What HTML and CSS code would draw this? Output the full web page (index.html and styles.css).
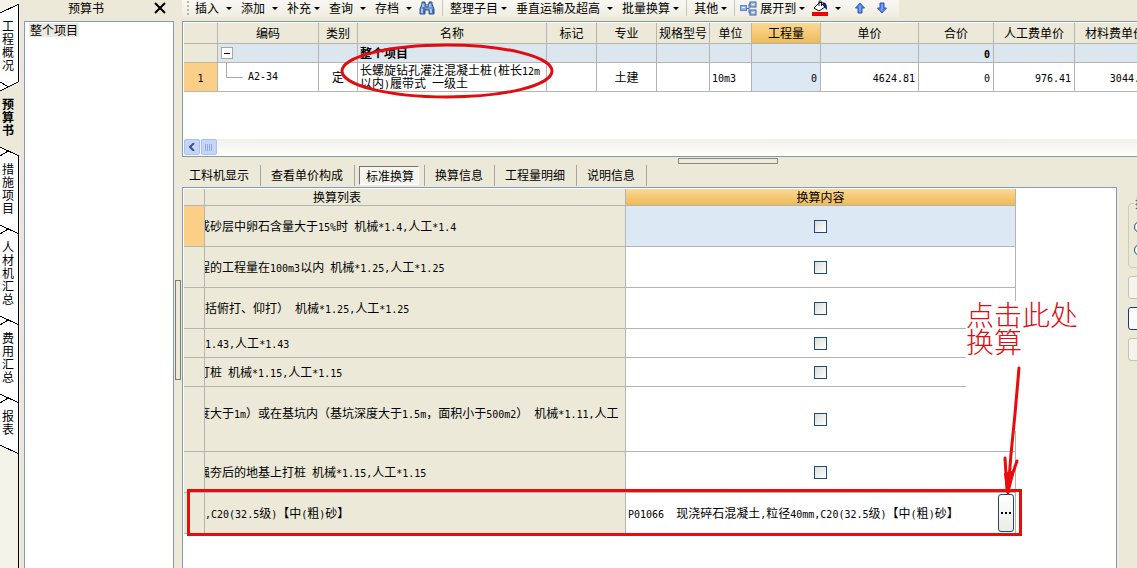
FILE: index.html
```html
<!DOCTYPE html>
<html lang="zh-CN">
<head>
<meta charset="utf-8">
<title>预算书</title>
<link rel="stylesheet" href="styles.css">
</head>
<body>
<div class="app">
  <nav class="side-tabs">
    <svg class="side-lines" width="20" height="568" viewBox="0 0 20 568" fill="none" stroke="#000" shape-rendering="crispEdges">
      <path d="M0 12.500L18 4V82L0 91Z" fill="#fff" stroke="none"/>
      <path d="M0 91L18 82H20V156L0 147Z" fill="#ece9d8" stroke="none"/>
      <path d="M0 147L18 155V453L0 445Z" fill="#fff" stroke="none"/>
      <path d="M0 13L18 4.500M0 82L8 86.500M0 91L18 82M0 147L18 155.500M8 151L0 156M0 225L18 233.500M8 229L0 234M0 316L18 324.500M8 320L0 325M0 394L18 402.500M8 398L0 403M0 445L18 453.500"/>
      <path d="M18.500 4V82M18.500 155V568"/>
    </svg>
    <button class="side-tab">工程概况</button>
    <button class="side-tab current">预算书</button>
    <button class="side-tab">措施项目</button>
    <button class="side-tab">人材机汇总</button>
    <button class="side-tab">费用汇总</button>
    <button class="side-tab">报表</button>
  </nav>

  <aside class="tree-pane">
    <header class="tree-head">
      <h1 class="tree-title">预算书</h1>
      <button class="close" aria-label="关闭"><svg width="12" height="12" viewBox="0 0 12 12" stroke="#000" stroke-width="2"><path d="M1 1L11 11M11 1L1 11"/></svg></button>
    </header>
    <div class="tree"><a class="tree-item" href="#">整个项目</a></div>
  </aside>
  <div class="v-split"><span class="v-grip"></span></div>

  <main class="main">
    <div class="toolbar-row">
      <div class="toolbar">
        <span class="grip"></span>
        <button class="tool">插入<i class="caret"></i></button>
        <button class="tool">添加<i class="caret"></i></button>
        <button class="tool tight">补充<i class="caret"></i></button>
        <button class="tool">查询<i class="caret"></i></button>
        <button class="tool">存档<i class="caret"></i></button>
        <button class="icon-tool" aria-label="查找">
          <svg width="16" height="15" viewBox="0 0 16 15"><path d="M3 1h3v2h1v3h2V3h1V1h3v2l2 5v5h-5V9H6v4H1V8l2-5z" fill="#6f9ad6" stroke="#2c4c8c"/><path d="M3 8v4M12 8v4M4 3v3M11 3v3" stroke="#e4f0ff" stroke-width="1"/><path d="M5 6v6M14 8v4" stroke="#244a90"/></svg>
        </button>
        <span class="sep"></span>
        <button class="tool tight">整理子目<i class="caret"></i></button>
        <button class="tool">垂直运输及超高<i class="caret"></i></button>
        <button class="tool tight">批量换算<i class="caret"></i></button>
        <span class="sep"></span>
        <button class="tool tight">其他<i class="caret"></i></button>
        <span class="sep"></span>
        <button class="tool tight">
          <svg class="expand" width="17" height="15" viewBox="0 0 17 15"><path d="M5 7.500H9M9 3V12M9 3h3M9 12h3" stroke="#4a6cae" fill="none"/><rect x=".5" y="4.500" width="6" height="5" fill="#8fb6f0" stroke="#5b84c8"/><rect x="10" y="1" width="6" height="5" fill="#a8c8f4" stroke="#3d63aa"/><rect x="10" y="9" width="6" height="5" fill="#a8c8f4" stroke="#3d63aa"/><path d="M2 6.500h3M12 3.500h2M12 11.500h2" stroke="#fff"/></svg>展开到<i class="caret"></i></button>
        <button class="icon-tool fill-tool" aria-label="填充颜色">
          <svg width="16" height="16" viewBox="0 0 16 16"><path d="M2 8L8 2L13 7L7 11z" fill="#fff" stroke="#111"/><path d="M7 6V1.500Q8.500-.5 9.500 2V6" fill="none" stroke="#111"/><path d="M10 2Q15 2 15 8V10L12 7z" fill="#15207c"/><rect y="12" width="16" height="4" fill="#f00000"/></svg>
          <i class="caret"></i>
        </button>
        <button class="icon-tool" aria-label="上移"><svg width="10" height="12" viewBox="0 0 10 12"><path d="M5 1L9.500 6H7V11H3V6H.5z" fill="#4f82ea" stroke="#2c55b8"/><path d="M5 3V10" stroke="#9cc0ff"/></svg></button>
        <button class="icon-tool" aria-label="下移"><svg width="10" height="12" viewBox="0 0 10 12"><path d="M5 11L9.500 6H7V1H3V6H.5z" fill="#4f82ea" stroke="#2c55b8"/><path d="M5 2V9" stroke="#9cc0ff"/></svg></button>
      </div>
    </div>

    <section class="items-panel">
      <div class="items-scroll">
        <table class="grid items">
          <colgroup><col class="w34"><col class="w101"><col class="w39"><col class="w189"><col class="w50"><col class="w60"><col class="w53"><col class="w42"><col class="w69"><col class="w98"><col class="w75"><col class="w81"><col class="w81"></colgroup>
          <thead>
            <tr><th></th><th>编码</th><th>类别</th><th>名称</th><th>标记</th><th>专业</th><th>规格型号</th><th>单位</th><th class="hot">工程量</th><th>单价</th><th>合价</th><th>人工费单价</th><th>材料费单价</th></tr>
          </thead>
          <tbody>
            <tr class="group"><td class="rowhead"></td><td><button class="toggle" aria-label="折叠"></button></td><td></td><td class="strong">整个项目</td><td></td><td></td><td></td><td></td><td></td><td></td><td class="num strong"><b class="n">0</b></td><td></td><td></td></tr>
            <tr class="item"><td class="rowhead hot-row"><span class="n">1</span></td>
              <td><div class="code"><svg class="branch" width="17" height="29" viewBox="0 0 17 29" fill="none" stroke="#a8a8a8"><path d="M.5 0V14.500H17"/></svg><span class="n">A2-34</span></div></td>
              <td class="mid">定</td><td class="name">长螺旋钻孔灌注混凝土桩<span class="n">(</span>桩长<span class="n">12m</span><br>以内<span class="n">)</span>履带式<span class="n"> </span>一级土</td><td></td><td class="mid">土建</td><td></td><td><span class="n">10m3</span></td><td class="num chosen"><span class="n">0</span></td><td class="num"><span class="n">4624.81</span></td><td class="num"><span class="n">0</span></td><td class="num"><span class="n">976.41</span></td><td class="num"><span class="n">3044.18</span></td></tr>
          </tbody>
        </table>
      </div>
      <div class="hbar">
        <button class="hbtn" aria-label="向左"><svg width="8" height="8" viewBox="0 0 8 8" fill="none" stroke="#3c5080" stroke-width="2"><path d="M6 0L2 4L6 8"/></svg></button>
        <button class="hbtn" aria-label="滚动"><svg width="8" height="7" viewBox="0 0 8 7" stroke="#8fa9ec"><path d="M.5 0V7M2.500 0V7M4.500 0V7M6.500 0V7"/></svg></button>
      </div>
      <svg class="mark ring" width="216" height="60" viewBox="0 0 216 60" fill="none" stroke="#e00c10" stroke-width="3"><ellipse cx="108" cy="29" rx="105" ry="26"/></svg>
    </section>

    <div class="h-split"><span class="h-grip"></span></div>
    <nav class="tabs">
      <button class="tab">工料机显示</button>
      <button class="tab">查看单价构成</button>
      <button class="tab pressed"><span>标准换算</span></button>
      <button class="tab">换算信息</button>
      <button class="tab">工程量明细</button>
      <button class="tab">说明信息</button>
    </nav>

    <div class="detail">
      <section class="convert-panel">
        <table class="grid convert">
          <colgroup><col class="w21"><col class="w421"><col class="w390"></colgroup>
          <thead><tr><th></th><th class="list-head">换算列表</th><th class="hot">换算内容</th></tr></thead>
          <tbody>
            <tr class="r41"><td class="hot-row"></td><td><div class="line cut">或砂层中卵石含量大于<span class="n">15%</span>时<span class="n"> </span>机械<span class="n">*1.4,</span>人工<span class="n">*1.4</span></div></td><td class="pick chosen"><input type="checkbox" aria-label="换算一"></td></tr>
            <tr class="r41"><td></td><td><div class="line cut">程的工程量在<span class="n">100m3</span>以内<span class="n"> </span>机械<span class="n">*1.25,</span>人工<span class="n">*1.25</span></div></td><td class="pick"><input type="checkbox" aria-label="换算二"></td></tr>
            <tr class="r41"><td></td><td><div class="line">括俯打、仰打）<span class="n"> </span>机械<span class="n">*1.25,</span>人工<span class="n">*1.25</span></div></td><td class="pick"><input type="checkbox" aria-label="换算三"></td></tr>
            <tr class="r29"><td></td><td><div class="line"><span class="n">1.43,</span>人工<span class="n">*1.43</span></div></td><td class="pick"><input type="checkbox" aria-label="换算四"></td></tr>
            <tr class="r29"><td></td><td><div class="line cut">打桩<span class="n"> </span>机械<span class="n">*1.15,</span>人工<span class="n">*1.15</span></div></td><td class="pick"><input type="checkbox" aria-label="换算五"></td></tr>
            <tr class="r65"><td></td><td><div class="line cut two">度大于<span class="n">1m</span>）或在基坑内（基坑深度大于<span class="n">1.5m</span>，面积小于<span class="n">500m2</span>）<span class="n"> </span>机械<span class="n">*1.11,</span>人工</div></td><td class="pick"><input type="checkbox" aria-label="换算六"></td></tr>
            <tr class="r41"><td></td><td><div class="line cut">强夯后的地基上打桩<span class="n"> </span>机械<span class="n">*1.15,</span>人工<span class="n">*1.15</span></div></td><td class="pick"><input type="checkbox" aria-label="换算七"></td></tr>
            <tr class="r41"><td></td><td><div class="line"><span class="n">,C20(32.5</span>级<span class="n">)</span>【中<span class="n">(</span>粗<span class="n">)</span>砂】</div></td>
              <td class="pick"><div class="choice"><span><span class="n">P01066  </span>现浇碎石混凝土<span class="n">,</span>粒径<span class="n">40mm,C20(32.5</span>级<span class="n">)</span>【中<span class="n">(</span>粗<span class="n">)</span>砂】</span><button class="more" aria-label="选择"><svg width="11" height="2" viewBox="0 0 11 2" fill="#000"><path d="M0 0h2v2H0zM4 0h2v2H4zM8 0h2v2H8z"/></svg></button></div></td></tr>
          </tbody>
        </table>
        <p class="note">点击此处<br>换算</p>
        <div class="mark box"></div>
        <svg class="mark arrow" width="24" height="134" viewBox="0 0 24 134" fill="none" stroke="#e80c0c" stroke-width="3" stroke-linecap="round" stroke-linejoin="round"><path d="M18 4L14 50L10 90L7 128M4 94L6 126L16 97"/><path d="M4 110L10 108L12 110L7 130z" fill="#e80c0c" stroke-width="2"/></svg>
      </section>
      <aside class="options">
        <fieldset class="modes">
          <legend>换算</legend>
          <input type="radio" name="mode" aria-label="方式一">
          <input type="radio" name="mode" aria-label="方式二">
        </fieldset>
        <button class="opt" aria-label="上移"></button>
        <button class="opt focus" aria-label="下移"></button>
        <button class="opt" aria-label="取消"></button>
      </aside>
    </div>
  </main>
</div>
</body>
</html>
```
FILE: styles.css
```css
* { box-sizing: border-box; }

body {
  margin: 0;
  background: #ece9d8;
  color: #000;
  font: 12px/14px "Noto Sans CJK SC", sans-serif;
}

button {
  margin: 0;
  padding: 0;
  border: 0;
  background: none;
  color: inherit;
  font: inherit;
  white-space: nowrap;
}

svg { display: block; flex: none; }

/* Latin text at half the width of a Chinese character */
.n {
  font-family: "DejaVu Sans Mono", monospace;
  font-size: 10px;
  line-height: 10px;
  white-space: pre;
}

.app {
  display: flex;
  height: 100vh;
  overflow: hidden;
}

/* vertical tabs */
.side-tabs {
  position: relative;
  flex: none;
  display: flex;
  flex-direction: column;
  align-items: flex-start;
  gap: 26px;
  width: 20px;
  padding: 19px 0 0 2px;
  background: #f4f3ea;
}
.side-lines { position: absolute; left: 0; top: 0; }
.side-tab {
  position: relative;
  width: 12px;
  line-height: 13px;
  white-space: normal;
  word-break: break-all;
}
.side-tab.current { font-weight: bold; }

/* project tree */
.tree-pane {
  flex: none;
  display: flex;
  flex-direction: column;
  width: 154px;
  padding-left: 4px;
  background: #ece6da;
}
.tree-head {
  display: flex;
  align-items: center;
  height: 21px;
  padding: 0 8px 6px 0;
  background: #ece9d8;
}
.tree-title {
  flex: 1;
  margin: 0;
  padding-right: 6px;
  font: inherit;
  text-align: center;
}
.tree {
  flex: 1;
  padding: 1px 4px;
  border: 1px solid #7f9db9;
  border-bottom: 0;
  background: #fff;
}
.tree-item {
  display: inline-block;
  padding: 0 1px;
  background: #ece9e0;
  color: inherit;
  text-decoration: none;
}

.v-split {
  flex: none;
  display: flex;
  align-items: center;
  width: 8px;
  padding: 92px 1px 0;
}
.v-grip {
  width: 6px;
  height: 100px;
  border: 1px solid #7c7c78;
  background: #ece9d8;
}

.main {
  flex: 1;
  display: flex;
  flex-direction: column;
  min-width: 0;
}

/* toolbar */
.toolbar-row { flex: none; display: flex; height: 21px; }
.toolbar {
  display: flex;
  align-items: center;
  height: 17px;
  padding: 0 0 1px 5px;
  background: linear-gradient(#f8f7f2, #f0eee2);
}
.grip {
  width: 2px;
  height: 14px;
  margin-right: 6px;
  background: repeating-linear-gradient(#b8b5a4 0 2px, transparent 2px 4px);
}
.tool { display: flex; align-items: center; gap: 7px; margin-right: 9px; }
.tool.tight { gap: 3px; }
.caret {
  border: 3px solid transparent;
  border-top-color: #000;
  border-bottom: 0;
}
.icon-tool { display: flex; align-items: center; gap: 7px; margin-right: 12px; }
.icon-tool:has(+ .sep) { margin-right: 7px; }
.tool + .icon-tool { margin-left: -2px; }
.fill-tool { margin-right: 14px; }
.sep {
  width: 1px;
  height: 16px;
  margin-right: 7px;
  background: #c9c6b6;
}
.tool:has(+ .sep) { margin-right: 7px; }
.sep:has(+ .tool .expand) { margin-right: 5px; }

/* shared grid look */
.grid {
  table-layout: fixed;
  border-collapse: separate;
  border-spacing: 0;
}
.grid th, .grid td {
  padding: 0;
  border-right: 1px solid #b4b4b0;
  border-bottom: 1px solid #b4b4b0;
  font-weight: normal;
  overflow: hidden;
  white-space: nowrap;
}
.grid th { background: #ece9d8; text-align: center; }
.grid th.hot { background: linear-gradient(#fbd894, #edbb58); }
.grid .hot-row { background: #fccf88; }
.grid .chosen { background: #dde8f5; }
.w34 { width: 34px; } .w101 { width: 101px; } .w39 { width: 39px; }
.w189 { width: 189px; } .w50 { width: 50px; } .w60 { width: 60px; }
.w53 { width: 53px; } .w42 { width: 42px; } .w69 { width: 69px; }
.w98 { width: 98px; } .w75 { width: 75px; } .w81 { width: 81px; }
.w21 { width: 21px; } .w421 { width: 421px; } .w390 { width: 390px; }

/* budget items */
.items-panel {
  position: relative;
  flex: none;
  display: flex;
  flex-direction: column;
  height: 136px;
  padding: 1px 0 0 1px;
  border: 1px solid #7f9d9f;
  border-right: 0;
  background: #fff;
}
.items-scroll { flex: 1; overflow: hidden; }
.items { width: 972px; }
.items th { height: 21px; }
.items td { padding: 0 2px; }
.items .rowhead { text-align: center; }
.group td { height: 19px; background: #dce6ef; }
.group .rowhead { background: #ece9d8; }
.item td { height: 29px; }
.items .num { padding-right: 3px; text-align: right; }
.items .mid { text-align: center; }
.items .strong { font-weight: bold; }
.items .name { line-height: 12px; }
.toggle {
  display: flex;
  align-items: center;
  justify-content: center;
  width: 12px;
  height: 12px;
  margin-left: 1px;
  border: 1px solid #a0a8a8;
  background: #fff;
}
.toggle::before { content: ""; width: 6px; height: 1px; background: #000; }
.code { display: flex; align-items: center; gap: 5px; height: 28px; padding-left: 6px; }
.hbar {
  flex: none;
  display: flex;
  gap: 1px;
  height: 17px;
  background: linear-gradient(#f1f0ea, #fefefc);
}
.hbtn {
  display: flex;
  align-items: center;
  justify-content: center;
  width: 16px;
  height: 16px;
  border: 1px solid #aac0f0;
  border-radius: 2px;
  background: #c5d4fb;
}

.h-split { flex: none; display: flex; justify-content: center; height: 7px; padding: 1px 0 0 136px; }
.h-grip { width: 100px; height: 6px; border: 1px solid #848c8c; }

/* detail tabs */
.tabs { flex: none; display: flex; height: 23px; }
.tab {
  margin: 1px 0;
  padding: 0 11px 2px 10px;
  border-right: 1px solid #a8a698;
}
.tab:first-child { padding-left: 7px; }
.tab.pressed { padding: 0 5px 0 4px; }
.tab.pressed span {
  display: block;
  padding: 2px 4px 1px 6px;
  border: 1px solid;
  border-color: #77756a #fff #fff #77756a;
  background: #f6f5ee;
}

/* conversions */
.detail { flex: 1; display: flex; min-height: 0; }
.convert-panel {
  position: relative;
  flex: 1;
  min-width: 0;
  padding: 1px 0 0 1px;
  border: 1px solid #7f9db9;
  border-bottom: 0;
  background: #fff;
}
.convert { width: 832px; }
.convert th { height: 17px; line-height: 14px; }
.convert .list-head { padding-right: 156px; }
.convert td { background: #ece9d8; }
.convert .pick { background: #fff; text-align: center; }
.convert .chosen { background: #dde8f5; }
.r41 td { height: 41px; }
.r29 td { height: 29px; }
.r65 td { height: 65px; }
.line.cut { margin-left: -7px; }
.line.two { padding-bottom: 12px; }
.pick input {
  appearance: none;
  display: block;
  width: 13px;
  height: 13px;
  margin: 0 auto;
  border: 1px solid #1c4a7c;
  background: linear-gradient(135deg, #dcdcd6, #fff);
}
.choice {
  display: flex;
  align-items: center;
  justify-content: space-between;
  padding: 0 1px 0 2px;
}
.more {
  display: flex;
  align-items: center;
  justify-content: center;
  width: 16px;
  height: 38px;
  border: 1px solid #1c4a6c;
  border-radius: 3px;
  background: linear-gradient(#fff, #ecebe4);
}

/* hand-drawn marks over the grids */
.mark { position: absolute; pointer-events: none; }
.ring { left: 156px; top: 20px; }
.box { left: 4px; top: 301px; width: 835px; height: 47px; border: 3px solid #e80c0c; }
.arrow { left: 818px; top: 176px; }
.note {
  position: absolute;
  left: 783px;
  top: 113px;
  width: 114px;
  height: 130px;
  margin: 0;
  background: #fff;
  color: #e00c10;
  font-size: 28px;
  font-weight: 300;
  line-height: 27px;
}

/* options beside the grid */
.options {
  flex: none;
  display: flex;
  flex-direction: column;
  gap: 8px;
  width: 20px;
  padding: 9px 0 0 11px;
  overflow: hidden;
}
.modes {
  flex: none;
  width: 120px;
  height: 72px;
  margin: 0;
  padding: 11px 5px;
  border: 1px solid #cfccb8;
  border-radius: 4px;
}
.modes legend { padding: 0 1px; color: #1446a0; }
.modes input {
  appearance: none;
  display: block;
  width: 12px;
  height: 12px;
  margin: 0 0 11px;
  border: 1px solid #1c4a7c;
  border-radius: 50%;
  background: #fff;
}
.opt {
  flex: none;
  width: 120px;
  height: 23px;
  border: 1px solid #c4c2b4;
  border-radius: 3px;
  background: #f5f4ec;
}
.opt.focus { border-color: #143c6c; background: #fcfcfa; }
```
